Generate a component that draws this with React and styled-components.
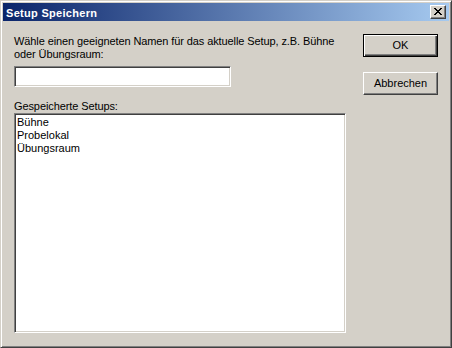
import React from "react";
import styled, { createGlobalStyle } from "styled-components";

const Global = createGlobalStyle`
  html, body { margin: 0; padding: 0; background: #D4D0C8; }
  * { box-sizing: border-box; }
`;

const Window = styled.div`
  width: 452px;
  height: 348px;
  background: #d4d0c8;
  border: 1px solid;
  border-color: #d4d0c8 #404040 #404040 #d4d0c8;
  box-shadow: inset 1px 1px #ffffff, inset -1px -1px #808080;
  padding: 2px;
  display: flex;
  flex-direction: column;
  font-family: "Liberation Sans", Arial, sans-serif;
  font-size: 11px;
  color: #000;
`;

const TitleBar = styled.div`
  height: 18px;
  flex: none;
  display: flex;
  align-items: center;
  justify-content: space-between;
  padding: 0 3px 0 3px;
  background: linear-gradient(to right, #0a246a, #a6caf0);
`;

const Title = styled.span`
  color: #fff;
  font-weight: bold;
  font-size: 11px;
  letter-spacing: 0.3px;
  line-height: 18px;
  padding-top: 1px;
`;

const CloseButton = styled.div`
  width: 16px;
  height: 14px;
  background: #d4d0c8;
  border: 1px solid;
  border-color: #ffffff #404040 #404040 #ffffff;
  box-shadow: inset -1px -1px #808080, inset 1px 1px #d4d0c8;
  display: flex;
  align-items: center;
  justify-content: center;
  padding: 0 1px 1px 0;
`;

const Body = styled.div`
  flex: 1;
  display: flex;
  gap: 17px;
  padding: 13px 11px 0 11px;
`;

const LeftColumn = styled.div`
  display: flex;
  flex-direction: column;
  padding-top: 1px;
  width: 332px;
`;

const Label = styled.div`
  line-height: 13px;
  letter-spacing: -0.1px;
  margin-bottom: ${(p) => p.$gap || 0}px;
`;

const sunken = `
  background: #fff;
  border: 1px solid;
  border-color: #808080 #ffffff #ffffff #808080;
  box-shadow: inset 1px 1px #404040, inset -1px -1px #d4d0c8;
`;

const TextInput = styled.div`
  ${sunken}
  width: 217px;
  height: 21px;
  margin-bottom: 13px;
`;

const ListBox = styled.div`
  ${sunken}
  width: 332px;
  height: 220px;
  padding: 2px 2px;
`;

const ListItem = styled.div`
  line-height: 13px;
  padding-left: 0;
`;

const RightColumn = styled.div`
  display: flex;
  flex-direction: column;
  gap: 15px;
`;

const Button = styled.div`
  width: 75px;
  height: 23px;
  display: flex;
  align-items: center;
  justify-content: center;
  background: #d4d0c8;
  border: 1px solid;
  border-color: ${(p) =>
    p.$default ? "#000" : "#ffffff #404040 #404040 #ffffff"};
  box-shadow: ${(p) =>
    p.$default
      ? "inset 1px 1px #ffffff, inset -1px -1px #404040, inset -2px -2px #808080"
      : "inset -1px -1px #808080, inset 1px 1px #d4d0c8"};
  font-size: 11px;
  line-height: 13px;
  padding-bottom: 1px;
`;

const CloseIcon = () => (
  <svg width="8" height="7" viewBox="0 0 8 7" shapeRendering="crispEdges">
    <path
      fill="#000"
      d="M0 0h2v1h-2zM6 0h2v1h-2zM1 1h2v1h-2zM5 1h2v1h-2zM2 2h4v1h-4zM3 3h2v1h-2zM2 4h4v1h-4zM1 5h2v1h-2zM5 5h2v1h-2zM0 6h2v1h-2zM6 6h2v1h-2z"
    />
  </svg>
);

const setups = ["Bühne", "Probelokal", "Übungsraum"];

export default function App() {
  return (
    <>
      <Global />
      <Window>
        <TitleBar>
          <Title>Setup Speichern</Title>
          <CloseButton>
            <CloseIcon />
          </CloseButton>
        </TitleBar>
        <Body>
          <LeftColumn>
            <Label $gap={5}>
              Wähle einen geeigneten Namen für das aktuelle Setup, z.B. Bühne
              <br />
              oder Übungsraum:
            </Label>
            <TextInput />
            <Label>Gespeicherte Setups:</Label>
            <ListBox>
              {setups.map((s) => (
                <ListItem key={s}>{s}</ListItem>
              ))}
            </ListBox>
          </LeftColumn>
          <RightColumn>
            <Button $default>OK</Button>
            <Button>Abbrechen</Button>
          </RightColumn>
        </Body>
      </Window>
    </>
  );
}
